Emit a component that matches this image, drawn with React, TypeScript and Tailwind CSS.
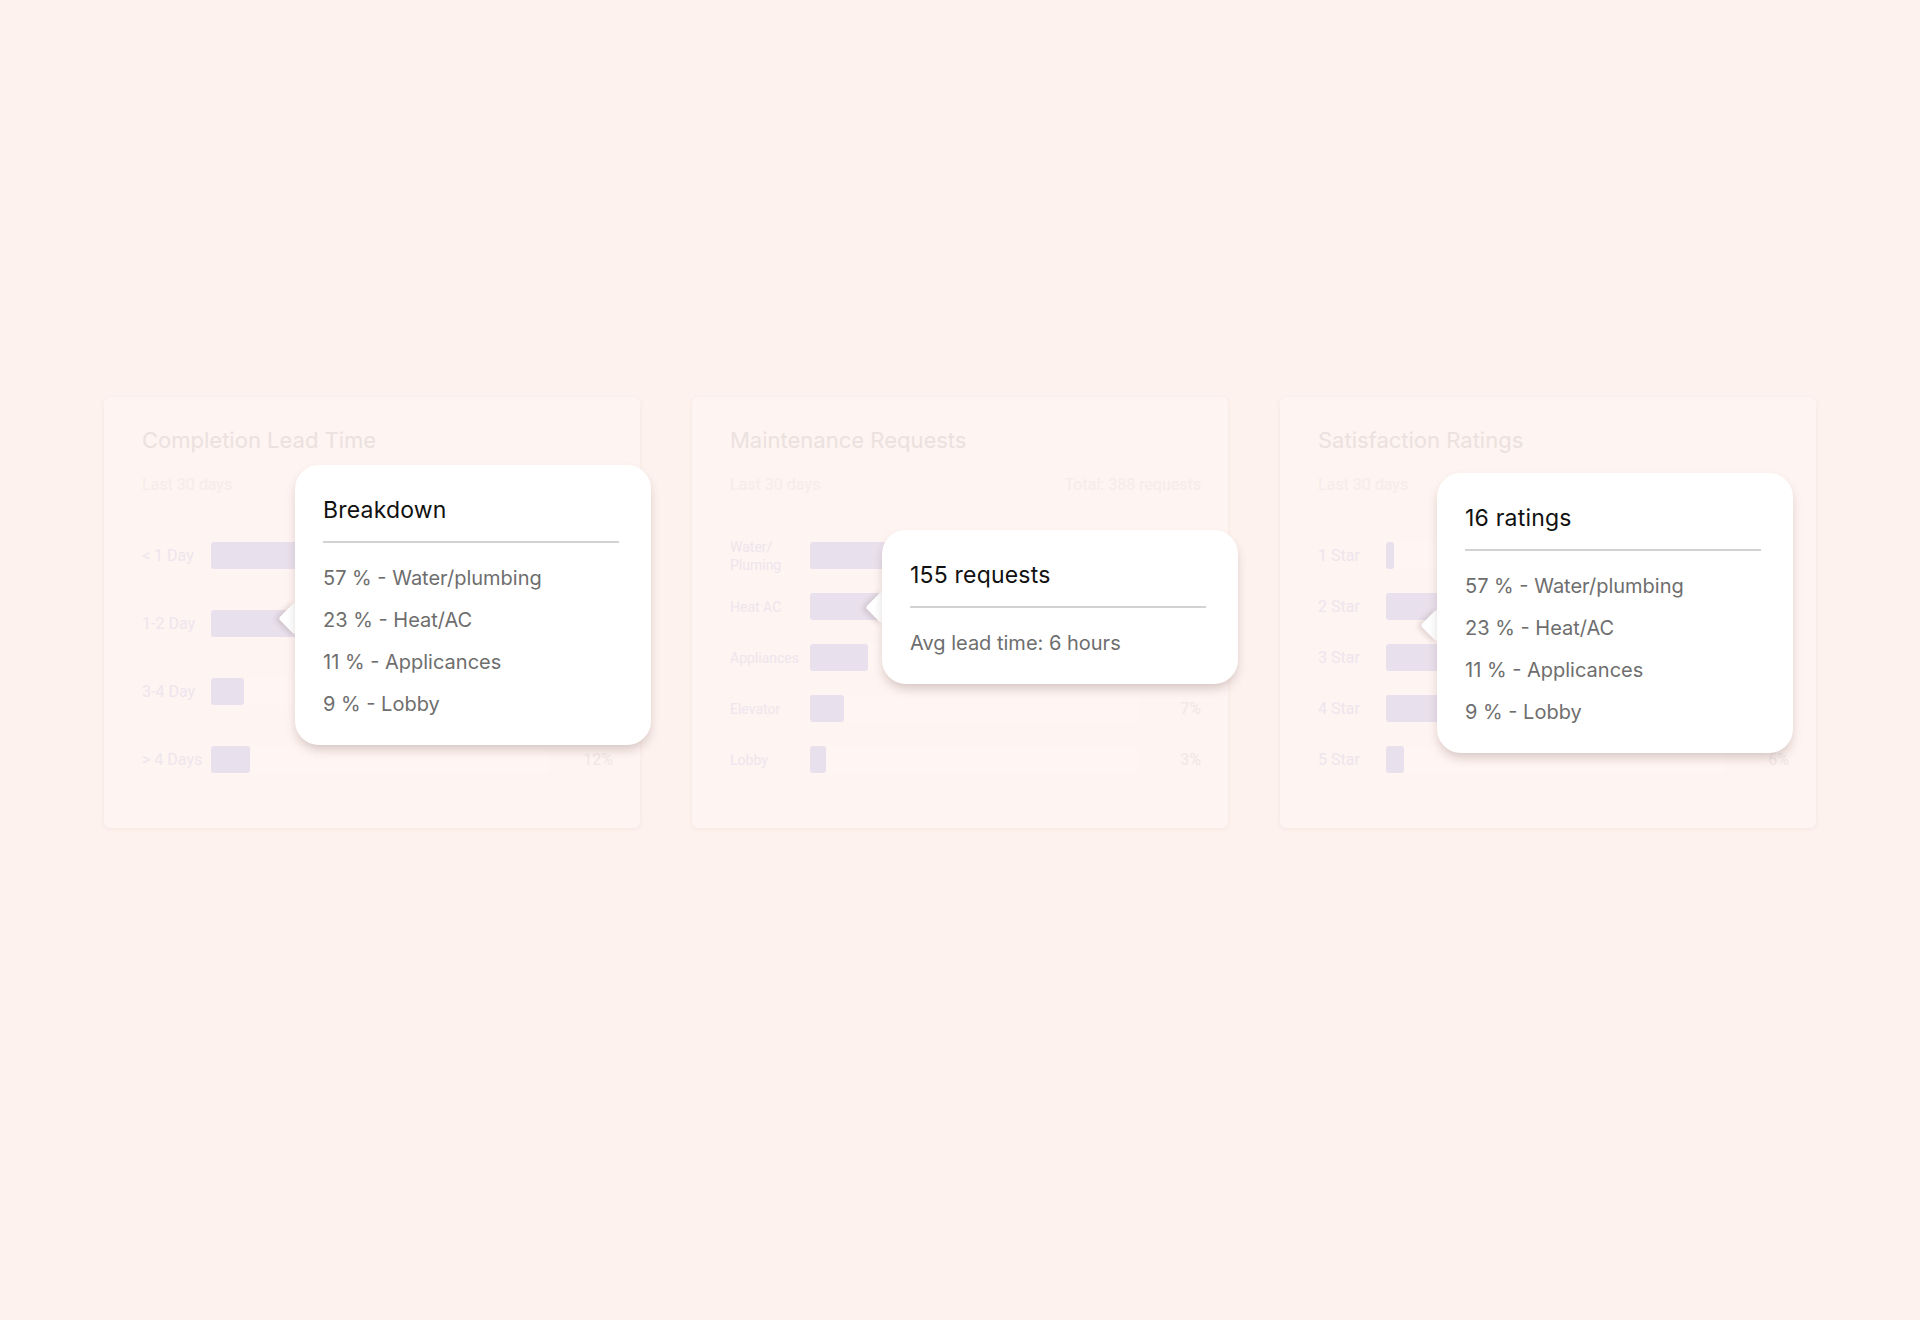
import React from 'react';

type Row = { label: string; width: number; pct: string };

type CardProps = {
  title: string;
  total?: string;
  labelClass: string;
  rows: Row[];
  children?: React.ReactNode;
};

const ChartCard: React.FC<CardProps> = ({ title, total, labelClass, rows, children }) => {
  return (
    <div className="relative h-[431px] w-[536px] shrink-0 rounded-md bg-[#fef4f1] pl-[38px] pr-[27px] pt-[29px] shadow-[0_1px_4px_rgba(214,180,170,0.18)]">
      <h3 className="font-['Inter',sans-serif] text-[22px] leading-[28px] text-[#ebe1df]">{title}</h3>
      <div className="mt-[19px] flex justify-between font-['Roboto',sans-serif] text-[16px] leading-[24px] text-[#f6ece9]">
        <span>Last 30 days</span>
        {total && <span>{total}</span>}
      </div>
      <div className="mt-[45px] flex h-[231px] flex-col justify-between">
        {rows.map((r) => (
          <div key={r.label} className="flex h-[27px] items-center">
            <div className={`${labelClass} shrink-0 font-['Roboto',sans-serif] text-[#efe5ee]`}>{r.label}</div>
            <div className="h-full flex-1 rounded-[3px] bg-[#fff5f2]">
              <div className="h-full rounded-[3px] bg-[#e8e0ec]" style={{ width: r.width }} />
            </div>
            <div className="w-[63px] shrink-0 text-right font-['Roboto',sans-serif] text-[16px] text-[#f1e7e5]">{r.pct}</div>
          </div>
        ))}
      </div>
      {children}
    </div>
  );
};

type TipProps = { pos: string; arrowTop: string; title: string; lines: string[] };

const Tooltip: React.FC<TipProps> = ({ pos, arrowTop, title, lines }) => {
  return (
    <div className={`absolute ${pos}`}>
      <div className={`absolute -left-[12px] ${arrowTop} h-[23px] w-[23px] rotate-45 rounded-[3px] bg-white shadow-[-2px_3px_5px_rgba(120,90,90,0.2)]`} />
      <div className="relative w-[356px] rounded-[24px] bg-white pb-[20px] pl-[28px] pr-[32px] pt-[31px] shadow-[0_6px_11px_-2px_rgba(120,90,90,0.32)]">
        <div className="font-['Inter',sans-serif] text-[23px] leading-[28px] tracking-[0.2px] text-[#111111]">{title}</div>
        <div className="mt-[17px] h-[2px] bg-[#d2d2d2]" />
        <div className="mt-[14px] font-['Inter',sans-serif] text-[20px] leading-[42px] text-[#6e6e6e]">
          {lines.map((l) => (
            <div key={l}>{l}</div>
          ))}
        </div>
      </div>
    </div>
  );
};

const breakdown = ['57 % - Water/plumbing', '23 % - Heat/AC', '11 % - Applicances', '9 % - Lobby'];

export default function App() {
  return (
    <div className="flex min-h-screen justify-center gap-[52px] bg-[#fdf2ee] pt-[397px]">
      <ChartCard
        title="Completion Lead Time"
        labelClass="w-[69px] text-[16px]"
        rows={[
          { label: '< 1 Day', width: 150, pct: '45%' },
          { label: '1-2 Day', width: 110, pct: '33%' },
          { label: '3-4 Day', width: 33, pct: '10%' },
          { label: '> 4 Days', width: 39, pct: '12%' },
        ]}
      >
        <Tooltip pos="left-[191px] top-[68px]" arrowTop="top-[142px]" title="Breakdown" lines={breakdown} />
      </ChartCard>
      <ChartCard
        title="Maintenance Requests"
        total="Total: 388 requests"
        labelClass="w-[80px] text-[14px] leading-[18px]"
        rows={[
          { label: 'Water/ Pluming', width: 140, pct: '40%' },
          { label: 'Heat AC', width: 90, pct: '25%' },
          { label: 'Appliances', width: 58, pct: '15%' },
          { label: 'Elevator', width: 34, pct: '7%' },
          { label: 'Lobby', width: 16, pct: '3%' },
        ]}
      >
        <Tooltip pos="left-[190px] top-[133px]" arrowTop="top-[66px]" title="155 requests" lines={['Avg lead time: 6 hours']} />
      </ChartCard>
      <ChartCard
        title="Satisfaction Ratings"
        labelClass="w-[68px] text-[16px]"
        rows={[
          { label: '1 Star', width: 8, pct: '3%' },
          { label: '2 Star', width: 80, pct: '25%' },
          { label: '3 Star', width: 96, pct: '30%' },
          { label: '4 Star', width: 110, pct: '36%' },
          { label: '5 Star', width: 18, pct: '6%' },
        ]}
      >
        <Tooltip pos="left-[157px] top-[76px]" arrowTop="top-[141px]" title="16 ratings" lines={breakdown} />
      </ChartCard>
    </div>
  );
}
